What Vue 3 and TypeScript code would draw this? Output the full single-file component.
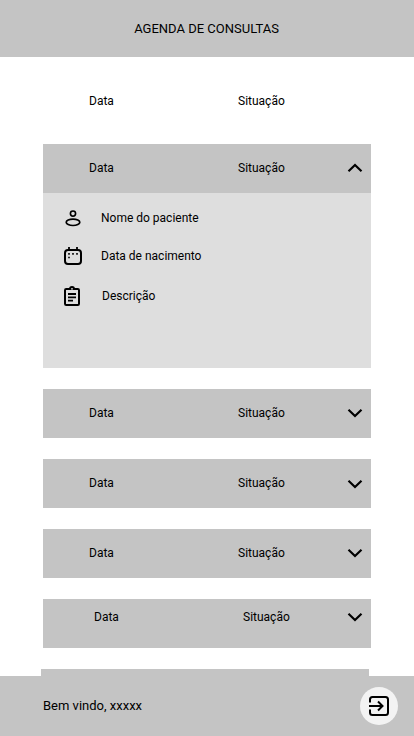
<script setup lang="ts">
interface Appointment {
  id: number
  open?: boolean
  variant?: string
}

const appointments: Appointment[] = [
  { id: 1, open: true },
  { id: 2 },
  { id: 3, variant: 'low-arrow' },
  { id: 4 },
  { id: 5, variant: 'raised' },
]
</script>

<template>
  <div class="screen">
    <header class="top">AGENDA DE CONSULTAS</header>
    <main class="list">
      <div class="row labels">
        <span>Data</span>
        <span>Situação</span>
      </div>
      <section v-for="item in appointments" :key="item.id" class="card">
        <div class="row" :class="item.variant">
          <span>Data</span>
          <span>Situação</span>
          <svg class="chevron" width="16" height="10" viewBox="0 0 16 10">
            <path :d="item.open ? 'M1.5 8.2 8 2l6.5 6.2' : 'M1.5 1.8 8 8l6.5-6.2'" />
          </svg>
        </div>
        <div v-if="item.open" class="details">
          <div class="detail">
            <svg width="20" height="20" viewBox="0 0 20 20">
              <circle cx="10" cy="5.6" r="2.6" stroke-width="1.6" />
              <ellipse cx="10" cy="14.3" rx="6.8" ry="3.2" stroke-width="1.7" />
            </svg>
            <span>Nome do paciente</span>
          </div>
          <div class="detail">
            <svg width="20" height="20" viewBox="0 0 20 20">
              <rect x="2" y="4" width="16" height="14" rx="3" stroke-width="2" />
              <path d="M6 1v3M14 1v3" stroke-width="1.8" />
              <path d="M5.200 7.900h1.600M9.200 7.900h1.600M13.200 7.900h1.600M5.200 11.500h1.600" stroke-width="1.6" />
            </svg>
            <span>Data de nacimento</span>
          </div>
          <div class="detail description">
            <svg width="20" height="20" viewBox="0 0 20 20">
              <rect x="2" y="3" width="14" height="16" rx="1.2" stroke-width="2" />
              <path d="M6 3a3 3 0 0 1 6 0v1H6z" fill="#000" stroke="none" />
              <circle cx="9" cy="2.800" r="0.9" fill="#dedede" stroke="none" />
              <path d="M5 8h8M5 11.3h8M5 14.6h5" stroke-width="1.8" />
            </svg>
            <span>Descrição</span>
          </div>
        </div>
      </section>
      <div class="next"></div>
    </main>
    <footer class="bottom">
      <span>Bem vindo, xxxxx</span>
      <button class="exit" type="button" aria-label="Sair">
        <svg width="22" height="22" viewBox="0 0 22 22">
          <path d="M2 7.500V4.500A2.500 2.500 0 0 1 4.500 2h13A2.500 2.500 0 0 1 20 4.500v13a2.500 2.500 0 0 1-2.500 2.500h-13A2.500 2.500 0 0 1 2 17.500V14.500M1 11h13M10 6.500l4.500 4.500-4.500 4.500" />
        </svg>
      </button>
    </footer>
  </div>
</template>

<style>
body {
  margin: 0;
  background: #fff;
}
</style>

<style scoped>
.screen {
  display: flex;
  flex-direction: column;
  width: 414px;
  height: 736px;
  overflow: hidden;
  font-family: Roboto, sans-serif;
  font-size: 12px;
  line-height: 14px;
  color: #000;
}
.top {
  display: flex;
  flex: none;
  align-items: center;
  justify-content: center;
  box-sizing: border-box;
  height: 57px;
  padding-right: 1px;
  background: #c4c4c4;
  font-size: 13px;
}
.list {
  display: flex;
  flex: 1;
  flex-direction: column;
  gap: 21px;
  min-height: 0;
  padding: 20px 43px 0;
  overflow: hidden;
}
.card {
  flex: none;
}
.row {
  display: grid;
  flex: none;
  grid-template-columns: 149px 109px 16px;
  align-items: center;
  box-sizing: border-box;
  height: 49px;
  padding-bottom: 1px;
  padding-left: 46px;
  background: #c4c4c4;
}
.row.labels {
  height: 48px;
  margin-bottom: -2px;
  padding-bottom: 0;
  background: none;
}
.row.raised {
  grid-template-columns: 149px 104px 16px;
  padding-bottom: 13px;
  padding-left: 51px;
}
.low-arrow .chevron {
  margin-top: 2px;
}
svg {
  display: block;
  fill: none;
  stroke: #000;
}
.chevron {
  stroke-width: 2.2;
}
.details {
  box-sizing: border-box;
  height: 175px;
  padding: 15px 20px;
  background: #dedede;
}
.detail {
  display: grid;
  grid-template-columns: 38px 1fr;
  align-items: center;
  height: 20px;
  margin-bottom: 18px;
}
.detail.description {
  grid-template-columns: 39px 1fr;
  margin-top: 20px;
}
.next {
  flex: none;
  height: 49px;
  margin: 0 2px 0 -2px;
  background: #c4c4c4;
}
.bottom {
  display: flex;
  flex: none;
  align-items: center;
  justify-content: space-between;
  box-sizing: border-box;
  height: 60px;
  padding: 0 16px 0 43px;
  background: #c4c4c4;
  font-size: 13px;
}
.exit {
  display: grid;
  place-items: center;
  width: 38px;
  height: 38px;
  padding: 0;
  border: 0;
  border-radius: 50%;
  background: #f3f3f3;
}
.exit svg {
  stroke-width: 2;
}
</style>
